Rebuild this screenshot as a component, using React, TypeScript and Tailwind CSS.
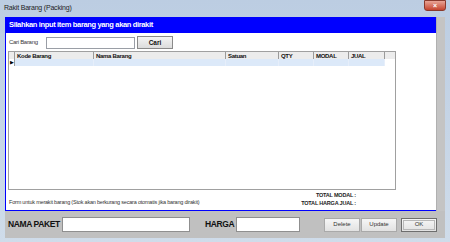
import React from 'react';

const cols = [
  { label: 'Kode Barang', w: 'w-[79px]' },
  { label: 'Nama Barang', w: 'w-[132px]' },
  { label: 'Satuan', w: 'w-[53px]' },
  { label: 'QTY', w: 'w-[35px]' },
  { label: 'MODAL', w: 'w-[35px]' },
  { label: 'JUAL', w: 'w-[36px]' },
];

const font = { fontFamily: '"Liberation Sans", Arial, sans-serif' };

export default function App() {
  return (
    <div
      className="w-[450px] h-[242px] flex flex-col bg-gradient-to-b from-[#bccde2] to-[#cfdcea] overflow-hidden"
      style={font}
    >
      {/* title bar */}
      <div className="h-[17px] flex items-start justify-between pl-[4px] pr-[4px]">
        <span className="mt-[4px] text-[7px] leading-[8px] text-[#1e1e1e] tracking-[-0.2px]">
          Rakit Barang (Packing)
        </span>
        <div className="w-[22px] h-[11px] rounded-b-[3px] bg-gradient-to-b from-[#e8a496] to-[#c4422d] border border-[#8a3a2d] flex items-center justify-center">
          <span className="text-white text-[7px] leading-none font-bold">×</span>
        </div>
      </div>

      {/* client */}
      <div className="flex-1 flex px-[5px] pb-[4px]">
        <div className="flex-1 flex flex-col bg-[#c0c0c0]">
          <div className="flex flex-1">
            {/* white panel */}
            <div className="w-[431px] flex flex-col bg-white border-l border-b border-[#0000ff]">
              <div className="h-[16px] bg-[#0000ff] flex items-center pl-[3px]">
                <span className="text-white font-bold text-[7.5px] tracking-[-0.35px]">
                  Silahkan input item barang yang akan dirakit
                </span>
              </div>

              {/* search */}
              <div className="flex items-center mt-[3px] pl-[3px] h-[13px]">
                <span className="w-[37px] text-[6px] text-[#3a3a3a] tracking-[-0.3px] whitespace-nowrap">Cari Barang</span>
                <div className="w-[89px] h-[12px] border border-[#9a9ea6] bg-white" />
                <div className="ml-[2px] w-[36px] h-[13px] border border-[#8a8a8a] bg-gradient-to-b from-[#f4f4f4] to-[#dcdcdc] flex items-center justify-center">
                  <span className="text-[6.5px] font-bold text-[#111]">Cari</span>
                </div>
              </div>

              {/* grid */}
              <div className="ml-[2px] mt-[2px] w-[388px] h-[139px] border border-[#a0a0a0] bg-white flex flex-col">
                <div className="flex h-[7px] bg-[#ececec]">
                  <div className="w-[6px] border-r border-[#9a9a9a]" />
                  {cols.map((c) => (
                    <div
                      key={c.label}
                      className={`${c.w} border-r border-[#9a9a9a] pl-[2px] flex items-center text-[6px] font-bold text-[#111] tracking-[-0.3px] leading-none whitespace-nowrap`}
                    >
                      {c.label}
                    </div>
                  ))}
                </div>
                <div className="flex h-[7px]">
                  <div className="w-[6px] border-r border-[#9a9a9a] flex items-center justify-center text-[5px] leading-none text-black">
                    ▶
                  </div>
                  <div className="w-[370px] bg-[#dce9f9] flex">
                    {cols.map((c) => (
                      <div key={c.label} className={`${c.w} border-r border-[#e6eefa]`} />
                    ))}
                  </div>
                </div>
              </div>

              {/* footer */}
              <div className="flex justify-between pl-[3px] pr-[80px] mt-[1px]">
                <div className="flex flex-col justify-end pb-[2px]">
                  <span className="text-[5.5px] text-[#333] tracking-[-0.2px] leading-[6px] whitespace-nowrap">
                    Form untuk merakit barang (Stok akan berkurang secara otomatis jika barang dirakit)
                  </span>
                </div>
                <div className="flex flex-col items-end text-[5.5px] font-bold text-[#222] leading-[8px] tracking-[-0.2px]">
                  <span>TOTAL MODAL :</span>
                  <span>TOTAL HARGA JUAL :</span>
                </div>
              </div>
            </div>
            <div className="flex-1 bg-[#c4c4c4] border-l border-[#b0b0b0]" />
          </div>

          {/* bottom bar */}
          <div className="h-[27px] flex items-center pl-[3px] pr-[8px]">
            <span className="text-[8.5px] font-bold text-[#111] tracking-[-0.4px] w-[54px] whitespace-nowrap">NAMA PAKET</span>
            <div className="w-[128px] h-[15px] border border-[#8f8f8f] bg-white" />
            <span className="ml-[15px] text-[8.5px] font-bold text-[#111] tracking-[-0.4px] w-[31px] whitespace-nowrap">HARGA</span>
            <div className="w-[64px] h-[15px] border border-[#8f8f8f] bg-white" />
            <div className="ml-auto flex gap-[1px]">
              <div className="w-[36px] h-[14px] border border-[#a9a9a9] bg-gradient-to-b from-[#f6f6f6] to-[#e2e2e2] flex items-center justify-center text-[6px] text-[#333]">
                Delete
              </div>
              <div className="w-[36px] h-[14px] border border-[#a9a9a9] bg-gradient-to-b from-[#f6f6f6] to-[#e2e2e2] flex items-center justify-center text-[6px] text-[#333]">
                Update
              </div>
              <div className="ml-[3px] w-[36px] h-[14px] border border-[#6e6e6e] bg-gradient-to-b from-[#f6f6f6] to-[#e2e2e2] flex items-center justify-center text-[6px] text-[#333] p-[1px]">
                <div className="w-full h-full border border-[#b8b8b8] flex items-center justify-center">OK</div>
              </div>
            </div>
          </div>
        </div>
      </div>
    </div>
  );
}
